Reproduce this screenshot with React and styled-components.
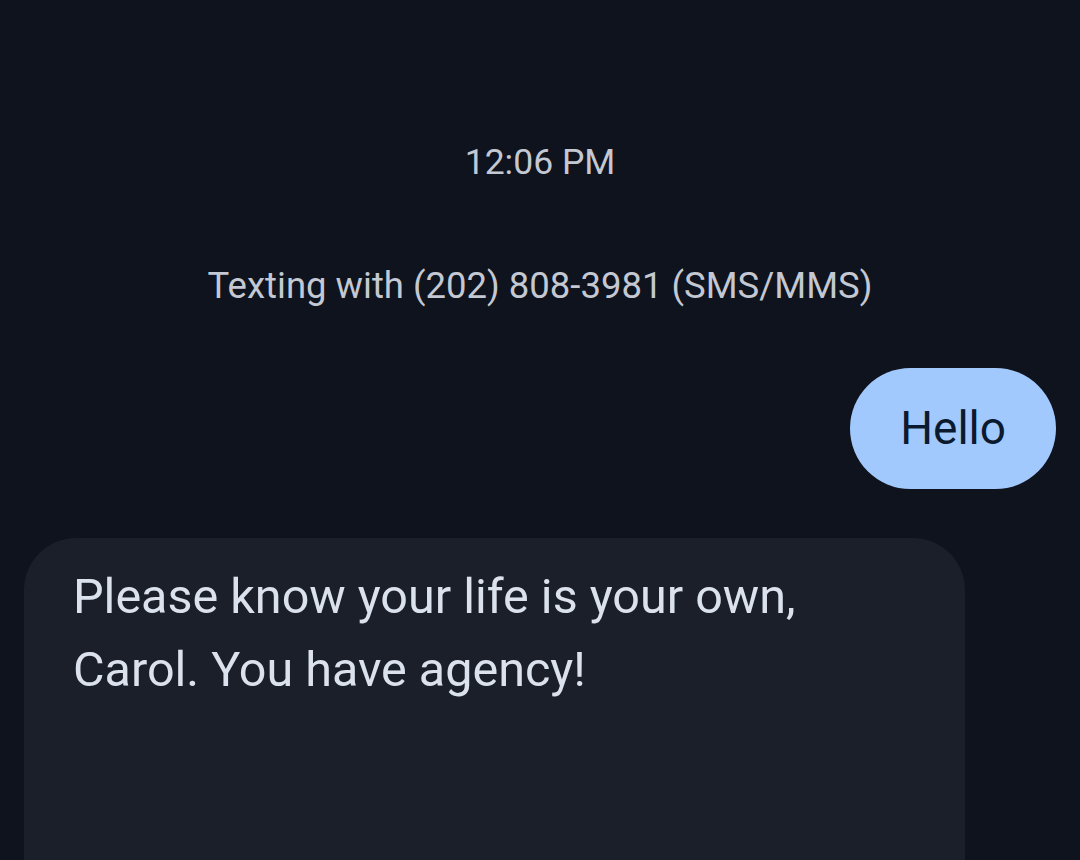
import React from "react";
import styled, { createGlobalStyle } from "styled-components";

const Global = createGlobalStyle`
  html, body { margin: 0; padding: 0; background: #0e131d; }
  body { font-family: Roboto, "Open Sans", sans-serif; overflow: hidden; }
`;

const Screen = styled.div`
  width: 1080px;
  height: 860px;
  background: #0e131d;
  display: flex;
  flex-direction: column;
  overflow: hidden;
  padding-top: 138px;
  box-sizing: border-box;
`;

const Meta = styled.div`
  text-align: center;
  color: #c3c8d2;
  font-size: ${(p) => p.$size}px;
  line-height: ${(p) => p.$lh}px;
  margin-bottom: ${(p) => p.$mb}px;
`;

const Row = styled.div`
  display: flex;
  justify-content: ${(p) => (p.$out ? "flex-end" : "flex-start")};
  padding: 0 24px;
  margin-bottom: ${(p) => p.$mb || 0}px;
`;

const Bubble = styled.div`
  box-sizing: border-box;
  font-size: ${(p) => (p.$out ? 46 : 48.5)}px;
  line-height: ${(p) => (p.$out ? 121 : 73)}px;
  ${(p) =>
    p.$out
      ? `
    background: #a2c9fd;
    color: #0b1a2e;
    border-radius: 61px;
    height: 121px;
    padding: 0 50px;
  `
      : `
    background: #1a1f2a;
    color: #dce2ed;
    border-radius: 52px;
    width: 941px;
    min-height: 420px;
    padding: 22px 49px;
  `}
`;

export default function App() {
  return (
    <>
      <Global />
      <Screen>
        <Meta $size={35.5} $lh={48} $mb={76}>12:06 PM</Meta>
        <Meta $size={36.5} $lh={48} $mb={58}>Texting with (202) 808-3981 (SMS/MMS)</Meta>
        <Row $out $mb={49}>
          <Bubble $out>Hello</Bubble>
        </Row>
        <Row>
          <Bubble>
            Please know your life is your own,
            <br />
            Carol. You have agency!
          </Bubble>
        </Row>
      </Screen>
    </>
  );
}
